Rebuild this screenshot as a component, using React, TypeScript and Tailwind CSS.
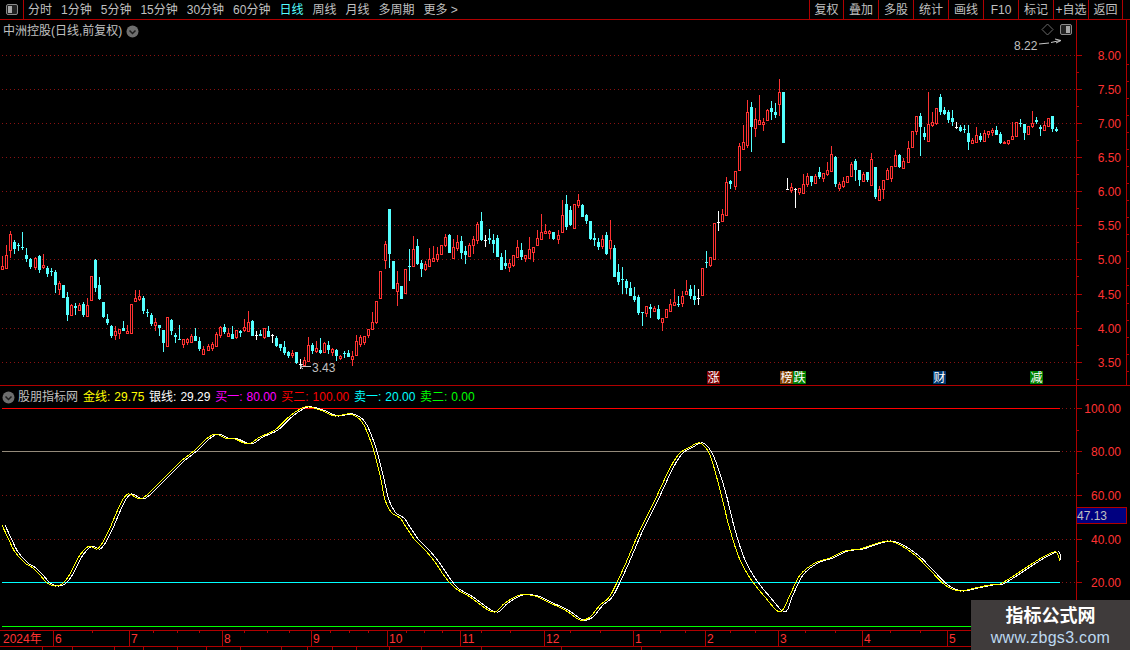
import { Fragment } from "react";

const FONT = "font-['Liberation_Sans','Noto_Sans_CJK_SC',sans-serif]";

// candles read off the chart: colour, high, body top, body bottom, low (zoom units, y = base + v / 3)
const SEGMENTS: [number, string][] = [
  [200, "r168,198,207,209;r135,165,204,204;r93,102,150,174;c120,126,147,162;c129,135,138,153;c96,141,144,150;c144,165,177,186;c174,177,201,207;r171,174,201,210;c165,168,210,219;r162,195,201,207;c198,204,222,231;c204,213,216,228;c210,216,255,279;r243,249,267,285;c255,255,294,294;c276,291,345,363;r312,315,345,345;c309,318,324,345;r309,315,330,333;c306,312,345,351;r294,315,348,351;r228,228,300,300;c178,180,264,276;c231,255,297,300;c306,306,351,354;c342,357,369,375;c375,378,408,414;r378,393,405,420;r387,387,399,417;c363,384,393,393;r375,393,399,399;r312,312,399,399;r270,294,303,306;r270,288,297,303;c288,294,333,342;c327,336,339,351;c339,345,372,378;r354,366,375,393;c375,375,384,408;c390,390,429,456;r351,351,438,438;c357,360,393,405;c399,405,411,429;c375,417,420,420;r417,417,432,444;r414,417,426,435;r402,408,426,429;c384,408,423,423;c411,423,447,453"],
  [200, "r438,447,462,462;r432,438,450,450;r426,432,444,453;r396,402,438,438;r378,382,405,414;c372,381,396,402;r384,399,408,408;c378,402,417,417;r390,390,411,417;c390,393,399,411;r357,381,390,396;r333,366,393,393;c360,363,408,408;w393,405,408,420;c390,402,408,408;r384,384,411,417;c378,393,411,411;w402,405,408,429;c408,414,438,441;c432,432,444,453;c423,441,459,465;c453,456,468,474;r450,459,465,474;c456,456,489,492;w477,492,495,507;r471,480,495,498;r411,435,483,483;c429,435,453,462;r423,444,453,459;c414,450,459,462;r426,429,456,456;c423,435,450,462;r444,447,456,468;c447,450,468,483;r465,468,474,480;c453,459,462,474;c450,459,471,471;r453,468,477,498;r405,423,465,468;r405,411,432,441;r408,408,426,435;r387,387,405,414;r336,366,387,387;r303,303,366,372;r213,213,294,297;r123,132,180,207;c27,27,162,204;c183,183,267,267;r213,249,273,318;c258,258,297,297"],
  [180, "r267,267,339,339;c207,258,261,303;r168,207,258,258;c177,198,252,255;c240,249,267,291;r243,252,267,273;r204,237,258,258;r198,234,243,246;r201,222,237,246;r195,195,222,222;r162,171,195,201;c162,165,219,219;r177,201,234,234;r165,186,204,213;c168,183,219,237;c198,213,225,252;r189,195,228,228;r168,177,195,222;r126,132,180,192;c96,123,180,183;w165,180,183,201;c147,174,180,192;c162,180,192,219;c165,174,231,231;c219,231,270,270;c210,249,258,267;r237,249,261,276;r225,225,255,261;r180,201,231,231;c189,210,231,240;r225,225,234,246;r171,207,234,234;r201,201,216,246;r150,174,195,198;r102,156,177,180;r132,153,159,162;r150,153,159,177;c156,156,177,180;r150,165,177,192;r60,105,156,156;c45,72,141,150;c78,90,135,138;r72,72,144,144;r42,60,75,84;c72,75,111,111;c102,105,123,132;c123,123,177,180;c159,174,180,198;c174,186,201,210;r165,177,198,207;c156,165,222,225;r120,180,204,237;c195,204,291,291;c252,276,306,315;c261,297,300,342;c297,303,324,342;c306,324,348,348;c321,348,360,366;c345,351,399,405;c396,396,399,438;r378,378,399,411;c372,381,387,414;r378,384,393,396;c375,387,417,420;r414,414,426,453;r387,387,411,411;r357,372,393,396;r327,366,375,375;c348,372,375,381;r333,348,369,381;r300,333,342,342;c315,327,348,357;c315,348,360,375;w327,354,357,375"],
  [210, "r174,175,255,255;c123,156,160,174;r141,141,165,171;r39,39,147,147"],
  [70, "w423,456,459,483;r417,432,453,456;r321,336,435,435;c330,333,342,357;r303,303,348,360;r219,228,300,300;r165,216,237,237;r90,126,225,234;c96,111,171,246;r114,147,174,201;r75,150,162,165;r144,156,162,183;r117,120,150,153;c93,114,126,150;c99,126,135,144;r27,66,102,138;c66,66,219,219;w324,357,360,360;r339,351,360,369;w354,357,360,414;r354,354,366,375;r312,342,369,372;r309,318,342,351;c318,318,336,348;r312,318,339,342;c291,306,321,327;r309,309,324,336;r276,300,312,318;r228,252,303,303;c258,261,342,351;r336,342,354,363;r321,333,348,354;r318,318,336,336;r276,282,318,321;c267,273,300,333;c300,300,330,348;r306,312,333,333;c306,306,330,336;r249,267,345,345;c291,291,381,387;r348,357,390,390"],
  [80, "r300,300,327,357;r264,270,297,300;r258,258,294,306;r210,225,258,261;c222,225,261,264;r234,243,264,267;r183,204,246,246;r153,153,201,204;r108,108,153,165;c99,108,141,228;c141,159,171,180;r36,132,183,183;r96,126,135,141;r84,84,129,135;c42,51,96,105;c81,90,102,105;c90,96,120,129;c90,114,126,138;w126,141,144,147;c135,141,153,156;c135,147,150,159;c135,159,186,210;r174,180,189,189;r141,165,186,189;c159,168,180,186;r150,159,183,183;r153,153,162,174;r144,150,156,168;c138,150,165,165;c156,162,189,192;r183,186,189,192;r180,180,189,195;r126,168,177,177;r126,126,168,171;c117,129,132,141;c132,132,159,180;r138,138,162,162;r93,129,138,144;c111,120,126,132;c135,141,147,168;r123,135,150,153;r114,114,138,138;c108,108,147,156;c141,147,153,156"],
];

const COLORS: Record<string, string> = { r: "#ff3232", c: "#54ffff", w: "#ffffff" };

const candles = SEGMENTS.flatMap(([base, rows]) =>
  rows.split(";").map((row) => {
    const [hi, top, bot, lo] = row.slice(1).split(",").map((v) => Math.round(base + Number(v) / 3));
    return { kind: row[0], hi, top, bot, lo };
  }),
);

const CURVE = [
  [2, 525], [8, 538], [15, 552], [25, 563], [33, 568], [40, 575], [47, 583], [55, 586], [62, 584], [70, 574], [78, 558], [85, 549], [90, 546], [97, 549],
  [103, 542], [110, 528], [120, 505], [128, 494], [140, 499], [150, 492], [165, 477], [180, 462], [195, 450], [205, 440], [215, 434], [225, 438],
  [235, 439], [248, 444], [260, 437], [275, 430], [290, 416], [305, 407], [320, 410], [335, 416], [350, 414], [362, 422], [372, 445],
  [380, 475], [385, 500], [392, 513], [400, 518], [406, 527], [415, 540], [425, 550], [435, 562], [445, 577], [455, 588], [470, 597], [485, 608],
  [495, 612], [505, 603], [520, 595], [535, 596], [550, 603], [565, 610], [580, 620], [590, 617], [600, 605], [610, 596], [625, 565], [640, 530],
  [655, 500], [670, 468], [680, 453], [690, 447], [700, 443], [710, 455], [720, 490], [730, 530], [740, 560], [750, 578], [765, 597], [780, 612],
  [790, 595], [800, 575], [815, 563], [830, 558], [845, 551], [860, 549], [875, 544], [888, 541], [900, 545], [915, 555], [930, 570],
  [945, 585], [960, 591], [975, 588], [990, 585], [1000, 584], [1015, 575], [1030, 565], [1045, 556], [1056, 552], [1060, 561],
];

const PRICE_TICKS = [
  ["8.00", 55], ["7.50", 89], ["7.00", 123], ["6.50", 157], ["6.00", 191],
  ["5.50", 225], ["5.00", 259], ["4.50", 294], ["4.00", 328], ["3.50", 362],
] as const;

const OSC_TICKS = [["100.00", 408], ["80.00", 451], ["60.00", 495], ["40.00", 539], ["20.00", 582]] as const;

const MONTHS = [
  ["6", 53], ["7", 129], ["8", 222], ["9", 311], ["10", 387], ["11", 460],
  ["12", 544], ["1", 633], ["2", 705], ["3", 778], ["4", 862], ["5", 947],
] as const;

const DATE_MINOR = [92, 153, 177, 199, 244, 267, 289, 330, 349, 368, 406, 424, 442, 481, 510, 570, 600, 660, 685, 730, 755, 805, 835, 890, 920, 975, 1005, 1040];

const PERIODS = ["分时", "1分钟", "5分钟", "15分钟", "30分钟", "60分钟", "日线", "周线", "月线", "多周期", "更多 >"];
const ACTIONS = [["复权", 34], ["叠加", 35], ["多股", 35], ["统计", 35], ["画线", 35], ["F10", 35], ["标记", 35], ["+自选", 35], ["返回", 34]] as const;

const LEGEND = [
  ["金线:", "29.75", "text-[#ffff00]"],
  ["银线:", "29.29", "text-white"],
  ["买一:", "80.00", "text-[#ff00ff]"],
  ["买二:", "100.00", "text-[#ff0000]"],
  ["卖一:", "20.00", "text-[#00ffff]"],
  ["卖二:", "0.00", "text-[#00ff00]"],
] as const;

const BOTTOM_CELLS = [43, 30, 42, 29, 34, 29, 34, 41, 26, 25, 24, 33, 32, 60, 80, 80];

// catmull-rom through the traced points so the oscillator bends instead of kinking
function smoothPath(points: number[][]) {
  let d = `M${points[0][0]} ${points[0][1]}`;
  for (let i = 0; i < points.length - 1; i++) {
    const p0 = points[Math.max(i - 1, 0)];
    const p1 = points[i];
    const p2 = points[i + 1];
    const p3 = points[Math.min(i + 2, points.length - 1)];
    const c1x = p1[0] + (p2[0] - p0[0]) / 6;
    const c1y = p1[1] + (p2[1] - p0[1]) / 6;
    const c2x = p2[0] - (p3[0] - p1[0]) / 6;
    const c2y = p2[1] - (p3[1] - p1[1]) / 6;
    d += ` C${c1x} ${c1y} ${c2x} ${c2y} ${p2[0]} ${p2[1]}`;
  }
  return d;
}

// the silver line lags the gold one, most on the steep fall before March
function lagged(points: number[][]) {
  return points.map(([x, y]) => {
    const lag = x > 718 && x < 785 ? 5 : x > 380 && x < 450 ? 4 : 3;
    return [Math.min(x + lag, 1060), y];
  });
}

function Candle({ index }: { index: number }) {
  const c = candles[index];
  const x = Math.round(2.33 + index * 4.023);
  const color = COLORS[c.kind];
  const h = Math.max(c.bot - c.top, 1);
  return (
    <g>
      <rect x={x} y={c.hi} width={1} height={Math.max(c.lo - c.hi, 1)} fill={color} />
      {c.kind === "r" ? (
        <rect x={x - 0.5} y={c.top + 0.5} width={2} height={h} fill="#000" stroke={color} />
      ) : (
        <rect x={x - 1} y={c.top} width={3} height={h} fill={color} />
      )}
    </g>
  );
}

function DotLine({ y }: { y: number }) {
  return <line x1={2} x2={1076} y1={y + 0.5} y2={y + 0.5} stroke="#8a1212" strokeDasharray="1 3" />;
}

function RoundChevron() {
  return (
    <svg width="13" height="13" viewBox="0 0 13 13" className="shrink-0">
      <circle cx="6.5" cy="6.5" r="6" fill="#6e6e6e" />
      <path d="M3.5 5.5 6.5 8.5 9.5 5.5" fill="none" stroke="#1c1c1c" strokeWidth="1.5" />
    </svg>
  );
}

function PaneToggle({ side }: { side: "left" | "right" }) {
  return (
    <svg width="12" height="11" viewBox="0 0 12 11">
      <rect x="0.5" y="0.5" width="11" height="10" rx="1.5" fill="#222" stroke="#8a8a8a" />
      <rect x={side === "left" ? 2 : 6} y="2" width="4" height="7" fill="#a8a8a8" />
    </svg>
  );
}

function Badge({ text, bg }: { text: string; bg: string }) {
  return <span className={`flex h-[13px] w-[13px] items-center justify-center text-[12px] leading-none text-white ${bg}`}>{text}</span>;
}

function Toolbar() {
  return (
    <div className="flex h-5 shrink-0 items-center border-b border-[#b00000] text-[12px] text-[#c0c0c0]">
      <div className="flex h-full w-6 items-center justify-center border-r border-[#b00000]">
        <PaneToggle side="left" />
      </div>
      <div className="flex items-center gap-[9px] pl-1">
        {PERIODS.map((p) => (
          <span key={p} className={p === "日线" ? "text-[#54ffff]" : ""}>
            {p}
          </span>
        ))}
      </div>
      <div className="ml-auto mr-[7px] flex h-full border-r border-[#b00000]">
        {ACTIONS.map(([label, width]) => (
          <div key={label} style={{ width }} className="flex items-center justify-center border-l border-[#b00000]">
            {label}
          </div>
        ))}
      </div>
    </div>
  );
}

function PricePane() {
  return (
    <div className="flex h-[366px] shrink-0 border-b border-[#b00000]">
      <div className="relative w-[1076px] shrink-0">
        <svg width="1076" height="365" viewBox="0 20 1076 365" shapeRendering="crispEdges" className="block">
          {PRICE_TICKS.map(([, y]) => (
            <DotLine key={y} y={y} />
          ))}
          {candles.map((_, i) => (
            <Candle key={i} index={i} />
          ))}
          <g shapeRendering="auto" fill="none" stroke="#c8c8c8">
            <path d="M1039 44 L1049 43 M1051 42.5 L1060 40.5 M1055 39 L1061 40.5 L1056 43" />
            <path d="M300 366.5 L311 366.5 M300 366.5 L303 364 M300 366.5 L303 369" />
          </g>
          <text x="1014" y="50" fontSize="12" fill="#c0c0c0" fontFamily="Liberation Sans">
            8.22
          </text>
          <text x="312" y="372" fontSize="12" fill="#c0c0c0" fontFamily="Liberation Sans">
            3.43
          </text>
          <path d="M1047.5 24 L1053 29.5 L1047.5 35 L1042 29.5 Z" fill="none" stroke="#6a6a6a" shapeRendering="auto" />
        </svg>
        <div className="absolute left-[3px] top-[2px] flex items-center gap-[4px] text-[12px] text-[#c0c0c0]">
          <span>中洲控股(日线,前复权)</span>
          <RoundChevron />
        </div>
        <div className="absolute left-[1060px] top-[4px]">
          <PaneToggle side="right" />
        </div>
        <div className="absolute left-[707px] top-[351px]">
          <Badge text="涨" bg="bg-[#800000]" />
        </div>
        <div className="absolute left-[780px] top-[351px] flex">
          <Badge text="榜" bg="bg-[#804000]" />
          <Badge text="跌" bg="bg-[#008000]" />
        </div>
        <div className="absolute left-[933px] top-[351px]">
          <Badge text="财" bg="bg-[#003870]" />
        </div>
        <div className="absolute left-[1030px] top-[351px]">
          <Badge text="减" bg="bg-[#008000]" />
        </div>
      </div>
      <svg width="54" height="365" viewBox="1076 20 54 365" shapeRendering="crispEdges" className="block">
        <rect x="1076" y="20" width="1" height="365" fill="#b00000" />
        <rect x="1126" y="20" width="1" height="365" fill="#b00000" />
        {PRICE_TICKS.map(([label, y]) => (
          <Fragment key={label}>
            <rect x="1076" y={y} width="6" height="1" fill="#b00000" />
            <rect x="1076" y={y + 17} width="3" height="1" fill="#b00000" />
            <rect x="1127" y={y + 9} width="2" height="1" fill="#b00000" />
            <rect x="1127" y={y + 26} width="2" height="1" fill="#b00000" />
            <text x="1121" y={y + 5} textAnchor="end" fontSize="12" fill="#ff3232" fontFamily="Liberation Sans" shapeRendering="auto">
              {label}
            </text>
          </Fragment>
        ))}
      </svg>
    </div>
  );
}

function OscillatorPane() {
  return (
    <div className="flex h-[244px] shrink-0">
      <div className="relative w-[1076px] shrink-0">
        <svg width="1076" height="244" viewBox="0 386 1076 244" shapeRendering="crispEdges" className="block">
          {OSC_TICKS.map(([, y]) => (
            <DotLine key={y} y={y} />
          ))}
          <line x1="2" x2="1060" y1="408.5" y2="408.5" stroke="#ff0000" />
          <line x1="2" x2="1060" y1="451.5" y2="451.5" stroke="#948a7a" />
          <line x1="2" x2="1060" y1="582.5" y2="582.5" stroke="#00ffff" />
          <line x1="2" x2="1060" y1="626.5" y2="626.5" stroke="#00ff00" />
          <path d={smoothPath(lagged(CURVE))} fill="none" stroke="#ffffff" />
          <path d={smoothPath(CURVE)} fill="none" stroke="#ffff00" />
        </svg>
        <div className="absolute left-[2px] top-[2px] flex items-center text-[12px] text-[#c0c0c0]">
          <RoundChevron />
          <span className="ml-[3px]">股朋指标网</span>
          <div className="ml-[5px] flex gap-[4.7px]">
            {LEGEND.map(([name, value, color]) => (
              <span key={name} className={`flex gap-[4px] ${color}`}>
                <span>{name}</span>
                <span>{value}</span>
              </span>
            ))}
          </div>
        </div>
      </div>
      <svg width="54" height="244" viewBox="1076 386 54 244" shapeRendering="crispEdges" className="block">
        <rect x="1076" y="386" width="1" height="244" fill="#b00000" />
        {OSC_TICKS.map(([label, y]) => (
          <Fragment key={label}>
            <rect x="1076" y={y} width="6" height="1" fill="#b00000" />
            <rect x="1076" y={y + 22} width="3" height="1" fill="#b00000" />
            <text x="1121" y={y + 5} textAnchor="end" fontSize="12" fill="#ff3232" fontFamily="Liberation Sans" shapeRendering="auto">
              {label}
            </text>
          </Fragment>
        ))}
        <rect x="1076.5" y="507.5" width="50" height="16" fill="#000080" stroke="#b00000" />
        <text x="1077" y="520" fontSize="12" fill="#c0c0c0" fontFamily="Liberation Sans" shapeRendering="auto">
          47.13
        </text>
      </svg>
    </div>
  );
}

function DateAxis() {
  return (
    <svg width="1130" height="17" viewBox="0 630 1130 17" shapeRendering="crispEdges" className="block shrink-0">
      <rect x="0" y="630" width="1130" height="1" fill="#b00000" />
      <rect x="0" y="646" width="1130" height="1" fill="#b00000" />
      {DATE_MINOR.map((x) => (
        <rect key={x} x={x} y="631" width="1" height="2" fill="#b00000" />
      ))}
      <text x="3" y="643" fontSize="12" fill="#ff3232" fontFamily="Liberation Sans, Noto Sans CJK SC" shapeRendering="auto">
        2024年
      </text>
      {MONTHS.map(([label, x]) => (
        <Fragment key={x}>
          <rect x={x} y="631" width="1" height="15" fill="#b00000" />
          <text x={x + 2} y="643" fontSize="12" fill="#ff3232" fontFamily="Liberation Sans" shapeRendering="auto">
            {label}
          </text>
        </Fragment>
      ))}
    </svg>
  );
}

export default function App() {
  return (
    <div className={`relative flex h-[650px] w-[1130px] flex-col overflow-hidden bg-black ${FONT}`}>
      <Toolbar />
      <PricePane />
      <OscillatorPane />
      <DateAxis />
      <div className="flex h-[3px] shrink-0">
        {BOTTOM_CELLS.map((w, i) => (
          <div key={i} style={{ width: w }} className="border-r border-[#b00000]" />
        ))}
      </div>
      {/* site watermark sits over the bottom right corner */}
      <div className="absolute bottom-0 right-0 flex h-[50px] w-[159px] flex-col items-center justify-center bg-[#3f3b3b] pt-[1px]">
        <span className="text-[18px] font-bold leading-[24px] text-white">指标公式网</span>
        <span className="text-[16px] leading-[20px] tracking-[0.3px] text-[#bcd8f0]">www.zbgs3.com</span>
      </div>
    </div>
  );
}
